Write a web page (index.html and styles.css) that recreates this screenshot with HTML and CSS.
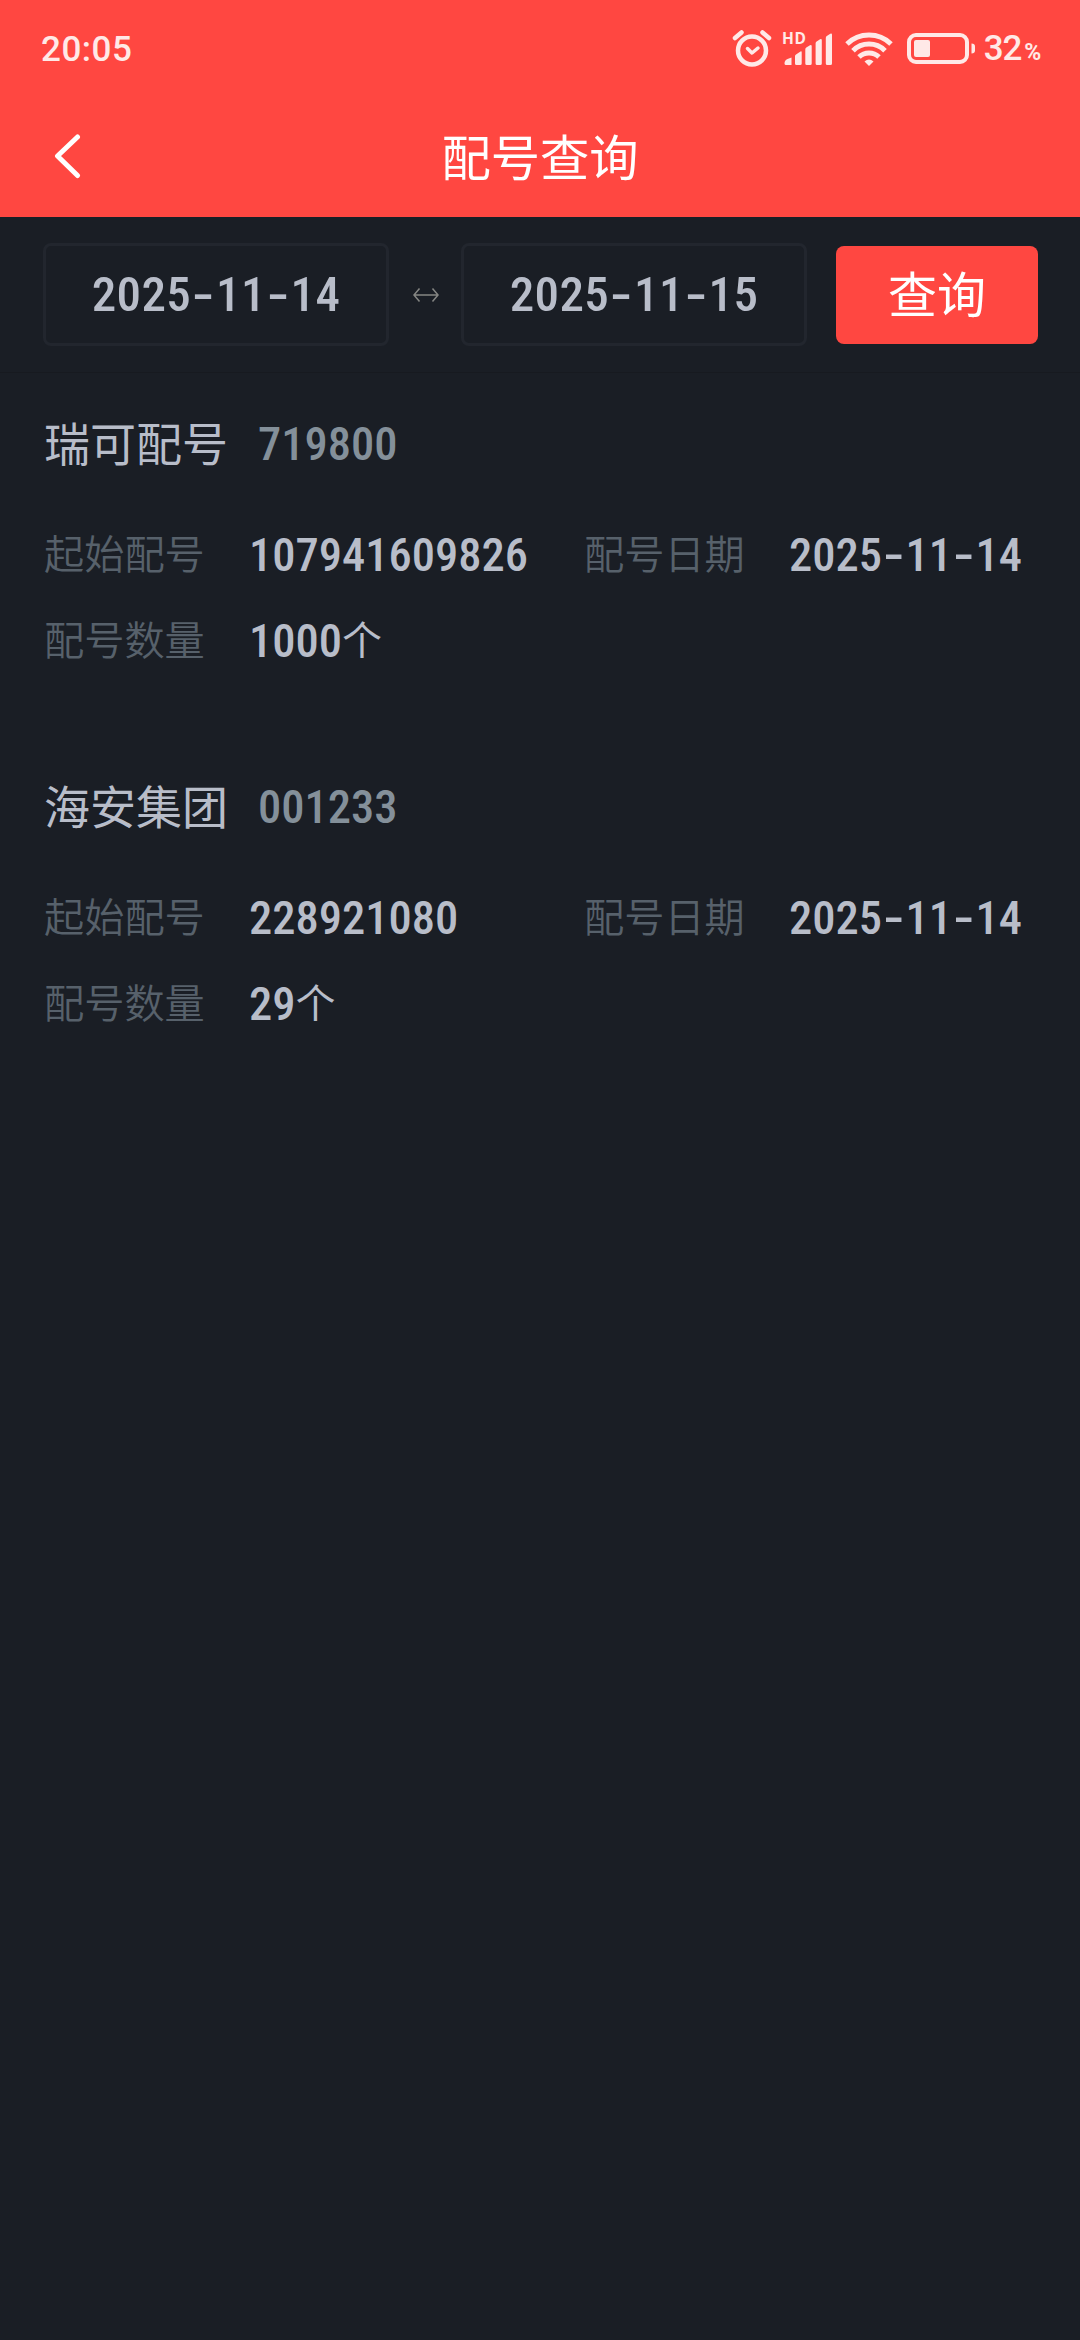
FILE: index.html
```html
<!DOCTYPE html>
<html lang="zh-CN">

<head>
    <meta charset="UTF-8">
    <meta name="viewport" content="width=device-width, initial-scale=1.0">
    <title>配号查询</title>
    <link rel="stylesheet" href="styles.css">
</head>

<body>

<header class="header">
    <div class="status-bar">
        <span class="time">20:05</span>
        <div class="status-icons">
            <svg class="icon-alarm" width="40" height="38" viewBox="0 0 40 38" fill="none" stroke="#ffe9e7" stroke-width="4.500" stroke-linecap="round">
                <circle cx="20" cy="20.500" r="14"/>
                <path d="M3 8 9.500 2.500M37 8 30.500 2.500"/>
                <path d="M15.500 18.500l4.500 4.500 6-5" stroke-width="3.500" stroke-linejoin="round"/>
            </svg>
            <svg class="icon-signal" width="51" height="50" viewBox="0 -8 51 50" fill="#ffe9e7">
                <text class="hd" x="0" y="12" textLength="24">HD</text>
                <path d="M2.500 31.500q0-3.500 3-4.500l4-1.500v7.500h-5.500q-1.500 0-1.500-1.500z"/>
                <path d="M13 24q0-1 1-1.500l4.500-3q1.200-.5 1.200.7V31.500q0 1.500-1.500 1.500h-3.700q-1.500 0-1.500-1.500z"/>
                <path d="M23.300 17.500q0-1.500 1-2l3.700-2.300q1.700-.7 1.700 1V31.500q0 1.500-1.500 1.500h-3.400q-1.500 0-1.500-1.500z"/>
                <path d="M33.600 11.500q0-1.500 1-2l3.500-2.300q1.700-.7 1.700 1V31.500q0 1.500-1.500 1.500h-3.200q-1.500 0-1.500-1.500z"/>
                <path d="M43.800 6q0-1.500 1-2l3.500-2.300q1.700-.7 1.700 1V31.500q0 1.500-1.500 1.500h-3.200q-1.500 0-1.500-1.500z"/>
            </svg>
            <svg class="icon-wifi" width="48" height="34" viewBox="0 0 48 34" fill="none" stroke="#ffe9e7" stroke-width="5">
                <path d="M2 12a31.500 31.500 0 0 1 44 0"/>
                <path d="M8 18.700a22.500 22.500 0 0 1 32 0"/>
                <path d="M14 25a14.500 14.500 0 0 1 20 0"/>
                <path d="M24 34l-4.500-4.500q4.500-3.800 9 0z" fill="#ffe9e7" stroke="none"/>
            </svg>
            <svg class="icon-battery" width="69" height="31" viewBox="0 0 69 31">
                <rect x="2" y="2" width="58" height="27" rx="7" fill="none" stroke="#ffe9e7" stroke-width="4"/>
                <rect x="7" y="7" width="16" height="17" rx="2" fill="#ffe9e7"/>
                <path d="M64.500 10.500q3.500 0 3.500 3v4q0 3-3.500 3z" fill="#ffe9e7"/>
            </svg>
            <span class="battery-text">32<span class="percent">%</span></span>
        </div>
    </div>
    <div class="nav-bar">
        <svg class="back" width="28" height="46" viewBox="0 0 28 46" fill="none" stroke="#fff" stroke-width="5" stroke-linecap="round" stroke-linejoin="round">
            <path d="M23.500 3 3.500 22l20 19.500"/>
        </svg>
        <h1 class="title">配号查询</h1>
    </div>
</header>

<div class="search-bar">
    <div class="date-input">2025<i>-</i>11<i>-</i>14</div>
    <svg class="arrow" width="26" height="14" viewBox="0 0 26 14" fill="none" stroke="#858683" stroke-width="1.500">
        <path d="M1 7H25M6.500 .5 1 7l5.500 6.500M19.500 .5 25 7l-5.500 6.500"/>
    </svg>
    <div class="date-input">2025<i>-</i>11<i>-</i>15</div>
    <button class="search-btn">查询</button>
</div>

<main class="list">
    <section class="item">
        <h2 class="item-title">瑞可配号<span class="code">719800</span></h2>
        <div class="row">
            <span class="label">起始配号</span>
            <span class="value">107941609826</span>
            <span class="label">配号日期</span>
            <span class="value">2025<i>-</i>11<i>-</i>14</span>
        </div>
        <div class="row">
            <span class="label">配号数量</span>
            <span class="value">1000<span class="unit">个</span></span>
        </div>
    </section>
    <section class="item">
        <h2 class="item-title">海安集团<span class="code">001233</span></h2>
        <div class="row">
            <span class="label">起始配号</span>
            <span class="value">228921080</span>
            <span class="label">配号日期</span>
            <span class="value">2025<i>-</i>11<i>-</i>14</span>
        </div>
        <div class="row">
            <span class="label">配号数量</span>
            <span class="value">29<span class="unit">个</span></span>
        </div>
    </section>
</main>

</body>
</html>
```

FILE: styles.css
```css
* {
    box-sizing: border-box;
}

body {
    margin: 0;
    min-height: 2340px;
    background-color: #1a1e25;
    color: #b8bdc9;
    font-family: "Noto Sans CJK SC", sans-serif;
}

svg {
    display: block;
    flex: none;
}

/* header */
.header {
    height: 217px;
    background-color: #ff4741;
}

.status-bar {
    display: flex;
    justify-content: space-between;
    align-items: center;
    height: 97px;
    padding: 0 40px 0 41px;
    color: #ffe9e7;
    font-family: Roboto, sans-serif;
    font-size: 35px;
    font-weight: 500;
}

.time {
    padding-top: 1px;
    letter-spacing: 0.5px;
}

.status-icons {
    display: flex;
    align-items: center;
}

.icon-signal {
    margin-left: 10px;
}

.icon-wifi {
    margin-left: 12px;
}

.icon-battery {
    margin-left: 14px;
}

.hd {
    font-family: "Open Sans", sans-serif;
    font-size: 15.5px;
    font-weight: 700;
}

.battery-text {
    margin-left: 8px;
    letter-spacing: -1.2px;
}

.percent {
    margin-left: 3px;
    font-size: 23px;
    font-weight: 700;
}

.nav-bar {
    display: grid;
    grid-template-columns: 1fr auto 1fr;
    align-items: center;
    height: 120px;
    padding: 0 54px;
}

.title {
    margin: 0;
    color: #fff;
    font-size: 49.3px;
    font-weight: 400;
    line-height: 115px;
    height: 120px;
}

/* search */
.search-bar {
    display: flex;
    align-items: center;
    height: 156px;
    padding: 0 42px 0 43px;
    border-bottom: 1px solid #171a20;
}

.date-input {
    width: 346px;
    height: 103px;
    border: 3px solid #22262e;
    border-radius: 8px;
    font-family: "Roboto Condensed", Roboto, sans-serif;
    font-size: 49px;
    font-weight: 500;
    letter-spacing: 0.4px;
    line-height: 97px;
    text-align: center;
}

/* dash takes the same cell as a digit */
.date-input i,
.value i {
    display: inline-block;
    width: 0.505em;
    font-style: normal;
    text-align: center;
    transform: scaleX(1.5);
}

.arrow {
    margin: 0 22px 0 24px;
}

.search-btn {
    width: 202px;
    height: 98px;
    margin-left: 29px;
    padding: 0 0 7px;
    border: none;
    border-radius: 8px;
    background-color: #ff4741;
    color: #fff;
    font-family: inherit;
    font-size: 49px;
    font-weight: 400;
    line-height: 91px;
}

/* list */
.item {
    height: 363px;
    padding: 33px 44px 0;
}

.item-title {
    display: flex;
    align-items: center;
    height: 70px;
    margin: 0;
    font-size: 46px;
    font-weight: 400;
}

.code {
    margin-left: 30px;
    padding-top: 6px;
    color: #84909a;
    font-family: "Roboto Condensed", Roboto, sans-serif;
    font-size: 46.5px;
    font-weight: 500;
}

.row {
    display: grid;
    grid-template-columns: 205px 335px 205px 1fr;
    align-items: center;
    height: 86px;
}

.item-title + .row {
    margin-top: 36px;
}

.label {
    padding-bottom: 7px;
    color: #57616b;
    font-size: 40.2px;
    font-weight: 350;
}

.value {
    font-family: "Roboto Condensed", Roboto, sans-serif;
    font-size: 46.5px;
    font-weight: 500;
    white-space: nowrap;
}

.unit {
    font-family: "Noto Sans CJK SC", sans-serif;
    font-size: 40px;
    font-weight: 400;
    line-height: 1;
    vertical-align: 2px;
}
```
